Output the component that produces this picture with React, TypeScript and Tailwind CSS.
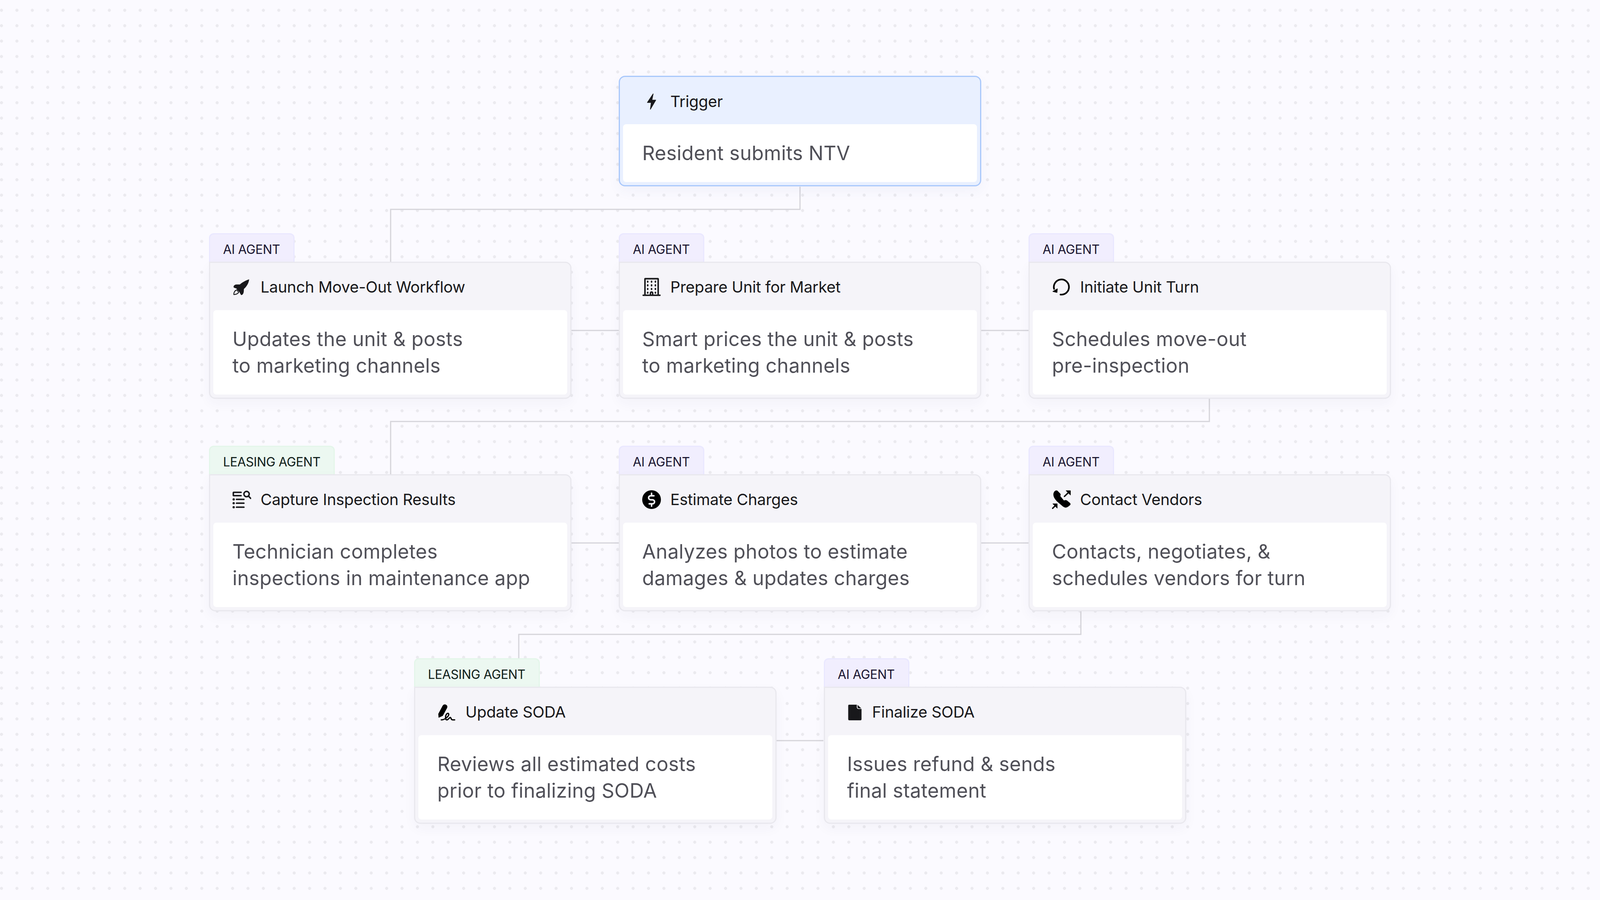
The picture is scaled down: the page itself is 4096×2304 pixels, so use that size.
import type { ReactNode } from "react";

type AgentKind = "ai" | "leasing";

type StepProps = {
  agent: AgentKind;
  icon: ReactNode;
  title: string;
  lines: string[];
};

function BoltIcon() {
  return (
    <svg viewBox="0 0 24 24" className="h-12 w-12 text-[#18181b]">
      <path
        d="M14 2.2 6.7 13.2h5l-1.2 8.6 6.8-11.6h-4.9z"
        fill="currentColor"
        stroke="currentColor"
        strokeWidth="0.9"
        strokeLinejoin="round"
      />
    </svg>
  );
}

function RocketIcon() {
  return (
    <svg viewBox="0 0 24 24" className="h-12 w-12 text-[#18181b]">
      <path
        fill="currentColor"
        d="M21.4 2C17 3.5 12.5 6 9.5 8.6H5.4C1.8 8.8.7 11.5 2 12.8l3 1 4 4.7 2 3.5c1.5.5 3-1 3.5-4l.2-3.6C18 11.5 21 7 21.4 2z"
      />
      <path
        d="M1.8 21.6c-.2-2.6 1.2-5.6 4.2-6l1.9 3.2c-1.2 1.8-3.6 2.6-6.1 2.8z"
        fill="#f5f4f9"
        stroke="currentColor"
        strokeWidth="1.1"
        strokeLinejoin="round"
      />
    </svg>
  );
}

function BuildingIcon() {
  const cols = [7.05, 12, 16.9];
  const rows = [5.05, 9.7, 14.4, 19.1];
  return (
    <svg viewBox="0 0 24 24" className="h-12 w-12 text-[#18181b]">
      <path
        d="M3.55 22V1.6c0-.2.15-.35.35-.35h16.2c.2 0 .35.15.35.35V22"
        fill="none"
        stroke="currentColor"
        strokeWidth="1.9"
      />
      <path d="M1.25 22.4h21.5" stroke="currentColor" strokeWidth="1.9" strokeLinecap="round" />
      {rows.map((y) =>
        cols.map((x) =>
          x === 12 && y === 19.1 ? null : (
            <ellipse key={`${x}-${y}`} cx={x} cy={y} rx="1" ry="1.4" fill="currentColor" />
          ),
        ),
      )}
      <path d="M10.6 22v-2.3a1.4 1.4 0 0 1 2.8 0V22" fill="none" stroke="currentColor" strokeWidth="1.9" />
    </svg>
  );
}

function TurnIcon() {
  return (
    <svg viewBox="0 0 24 24" className="h-12 w-12 text-black">
      <path
        d="M10.9 21.55A9.7 9.7 0 1 0 2.7 14.3"
        fill="none"
        stroke="currentColor"
        strokeWidth="2.1"
        strokeLinecap="round"
      />
      <path
        d="M1.2 17.6 6.9 14.2 6.4 18.9z"
        fill="currentColor"
        stroke="currentColor"
        strokeWidth="0.8"
        strokeLinejoin="round"
      />
    </svg>
  );
}

function InspectionIcon() {
  return (
    <svg viewBox="0 0 24 24" className="h-12 w-12 text-[#18181b]">
      <g fill="none" stroke="currentColor" strokeWidth="1.9" strokeLinecap="round">
        <path d="M11.1 2.7H1.6c-.25 0-.45.2-.45.45V6.5c0 .25.2.45.45.45h9.5" />
        <path d="M5.2 11.7h9.5M5.2 16.6h9.5M5.2 21.7h9.5" />
        <circle cx="18.1" cy="4.9" r="3.4" />
        <path d="m20.7 7.6 2.6 2.8" />
      </g>
      <circle cx="1.6" cy="11.7" r="1.45" fill="currentColor" />
      <circle cx="1.6" cy="16.6" r="1.45" fill="currentColor" />
      <circle cx="1.6" cy="21.7" r="1.45" fill="currentColor" />
    </svg>
  );
}

function DollarIcon() {
  return (
    <svg viewBox="0 0 24 24" className="h-12 w-12">
      <circle cx="12" cy="12" r="12" fill="#000" />
      <path
        d="M15 7.1h-4.2a2.55 2.55 0 0 0 0 5.1h2.4a2.6 2.6 0 0 1 0 5.2H9M12 3.9v3.2M12 17.4v3"
        fill="none"
        stroke="#f5f4f9"
        strokeWidth="2"
        strokeLinecap="round"
      />
    </svg>
  );
}

function PhoneIcon() {
  return (
    <svg viewBox="0 0 24 24" className="h-12 w-12 text-black">
      <path
        fill="currentColor"
        d="M1.8 5.5C1.8 3 3.5.3 5.5.3c.8 0 1.4.2 1.9.7l3.2 3.3c.7.7.7 2 0 3.1l4.7 5.7c1.2-.5 2.7-.7 3.8-.1l4.2 3.5c.6.7.6 1.8.1 2.4L20.8 21c-1.3 1-2.8 1.4-3.6 1.2-1.7-.1-2.9-1.2-3.8-1.9l-6.6-5.7C4.5 12.3 1.8 9 1.8 5.5z"
      />
      <path d="M16 7.9 21.5 2.6" stroke="currentColor" strokeWidth="1.7" strokeLinecap="round" />
      <path d="M17.9.5h5.8v5.8z" fill="currentColor" stroke="currentColor" strokeWidth="0.5" strokeLinejoin="round" />
      <path d="M.9 23.1 4.4 19.6" stroke="currentColor" strokeWidth="1.7" strokeLinecap="round" />
      <path d="M1 17.3h5.8v5.8z" fill="currentColor" stroke="currentColor" strokeWidth="0.5" strokeLinejoin="round" />
    </svg>
  );
}

function SignatureIcon() {
  return (
    <svg viewBox="0 0 24 24" className="h-12 w-12 text-black">
      <path
        fill="currentColor"
        d="M1 14.3 6.6 3.8C7.5 2.2 9.5 1.7 11 2.6c1.6.8 2 2.4 1.3 4L6.8 16.8 1.4 19.2z"
      />
      <path
        d="M4.8 21.9c2.2 0 3.7-.6 5-1.4 2.7-1.7 5.2-4.5 4.5-6.2-.6-1.3-2.3-.8-3.3 1.2-1 2-1.4 6.3 1 6.4 2 0 3.3-3.4 4.5-3.1 1.1.2.5 2.7 2.3 3 1.2.2 2.2.1 3.2.1"
        fill="none"
        stroke="currentColor"
        strokeWidth="1.6"
        strokeLinecap="round"
        strokeLinejoin="round"
      />
    </svg>
  );
}

function FileIcon() {
  return (
    <svg viewBox="0 0 20 24" className="h-12 w-10 text-[#18181b]">
      <path
        fill="currentColor"
        d="M2.4 2.5h9.8v3.3a2.2 2.2 0 0 0 2.2 2.2h3.85v13.3a1.2 1.2 0 0 1-1.2 1.2H2.4a1.2 1.2 0 0 1-1.2-1.2V3.7a1.2 1.2 0 0 1 1.2-1.2z"
      />
      <path fill="currentColor" d="M13.2 2.7 18 7.3h-3a1.8 1.5 0 0 1-1.8-1.5z" />
    </svg>
  );
}

function AgentTab({ agent }: { agent: AgentKind }) {
  if (agent === "leasing") {
    return (
      <div className="flex h-[73px] w-[322px] items-center rounded-t-[12px] border-[3px] border-b-0 border-[#e4f6ea] bg-[#ecf8f1] pt-[7px] pl-[33px] text-[32px] tracking-[-0.4px] text-[#10201a]">
        LEASING AGENT
      </div>
    );
  }
  return (
    <div className="flex h-[73px] w-[219px] items-center rounded-t-[12px] border-[3px] border-b-0 border-[#eae8ff] bg-[#f1eefe] pt-[7px] pl-[33px] text-[32px] tracking-[-0.35px] text-[#1a1530]">
      AI AGENT
    </div>
  );
}

function Step({ agent, icon, title, lines }: StepProps) {
  return (
    <div className="flex w-[928px] flex-col items-start">
      <AgentTab agent={agent} />
      <div className="w-full rounded-[16px] rounded-tl-none border-[3px] border-[#e9e8ee] bg-[#f5f4f9] px-[8px] pb-[8px] shadow-[0_12px_32px_rgba(60,50,110,0.04)]">
        <div className="flex h-[121px] items-center gap-6 pt-[2px] pl-[49px] text-[40px] tracking-[-0.3px] text-[#18181b]">
          {icon}
          <span>{title}</span>
        </div>
        <div className="rounded-[8px] bg-white py-10 pr-12 pl-[49px] text-[50.5px] leading-[68px] tracking-[0.25px] text-[#505058]">
          {lines.map((line) => (
            <div key={line}>{line}</div>
          ))}
        </div>
      </div>
    </div>
  );
}

function TriggerCard() {
  return (
    <div className="w-[928px] rounded-[16px] border-[3px] border-[#a9c8fb] bg-[#e9f0ff] px-[8px] pb-[8px] shadow-[0_12px_32px_rgba(60,80,160,0.05)]">
      <div className="flex h-[121px] items-center gap-6 pt-[4px] pl-[49px] text-[40px] tracking-[-0.3px] text-[#18181b]">
        <BoltIcon />
        <span>Trigger</span>
      </div>
      <div className="rounded-[8px] bg-white py-10 pr-12 pl-[49px] text-[50.5px] leading-[68px] tracking-[0.25px] text-[#505058]">
        Resident submits NTV
      </div>
    </div>
  );
}

function Connectors() {
  const paths = [
    "M2048 478V536H1000V671",
    "M1463 846H1584",
    "M2512 846H2633",
    "M3096 1021V1079H1000V1214",
    "M1463 1390H1584",
    "M2512 1390H2633",
    "M2767 1564V1624H1328V1685",
    "M1988 1896H2108",
  ];
  return (
    <svg viewBox="0 0 4096 2304" className="absolute inset-0 h-full w-full">
      {paths.map((d) => (
        <path key={d} d={d} fill="none" stroke="#d5d4da" strokeWidth="3" />
      ))}
    </svg>
  );
}

export default function App() {
  return (
    <div className="relative h-[2304px] w-[4096px] overflow-hidden bg-[#fbfaff] bg-[radial-gradient(circle,#ebeaef_3.6px,transparent_4.2px)] bg-[length:39.45px_39.45px] bg-[position:-15.9px_6.6px] [font-family:Inter,sans-serif]">
      <Connectors />
      <div className="relative flex flex-col items-center pt-[194px]">
        <TriggerCard />

        <div className="mt-[120px] flex items-start gap-[121px]">
          <Step
            agent="ai"
            icon={<RocketIcon />}
            title="Launch Move-Out Workflow"
            lines={["Updates the unit & posts", "to marketing channels"]}
          />
          <Step
            agent="ai"
            icon={<BuildingIcon />}
            title="Prepare Unit for Market"
            lines={["Smart prices the unit & posts", "to marketing channels"]}
          />
          <Step
            agent="ai"
            icon={<TurnIcon />}
            title="Initiate Unit Turn"
            lines={["Schedules move-out", "pre-inspection"]}
          />
        </div>

        <div className="mt-[120px] flex items-start gap-[121px]">
          <Step
            agent="leasing"
            icon={<InspectionIcon />}
            title="Capture Inspection Results"
            lines={["Technician completes", "inspections in maintenance app"]}
          />
          <Step
            agent="ai"
            icon={<DollarIcon />}
            title="Estimate Charges"
            lines={["Analyzes photos to estimate", "damages & updates charges"]}
          />
          <Step
            agent="ai"
            icon={<PhoneIcon />}
            title="Contact Vendors"
            lines={["Contacts, negotiates, &", "schedules vendors for turn"]}
          />
        </div>

        <div className="mt-[120px] flex items-start gap-[121px]">
          <Step
            agent="leasing"
            icon={<SignatureIcon />}
            title="Update SODA"
            lines={["Reviews all estimated costs", "prior to finalizing SODA"]}
          />
          <Step
            agent="ai"
            icon={<FileIcon />}
            title="Finalize SODA"
            lines={["Issues refund & sends", "final statement"]}
          />
        </div>
      </div>
    </div>
  );
}
